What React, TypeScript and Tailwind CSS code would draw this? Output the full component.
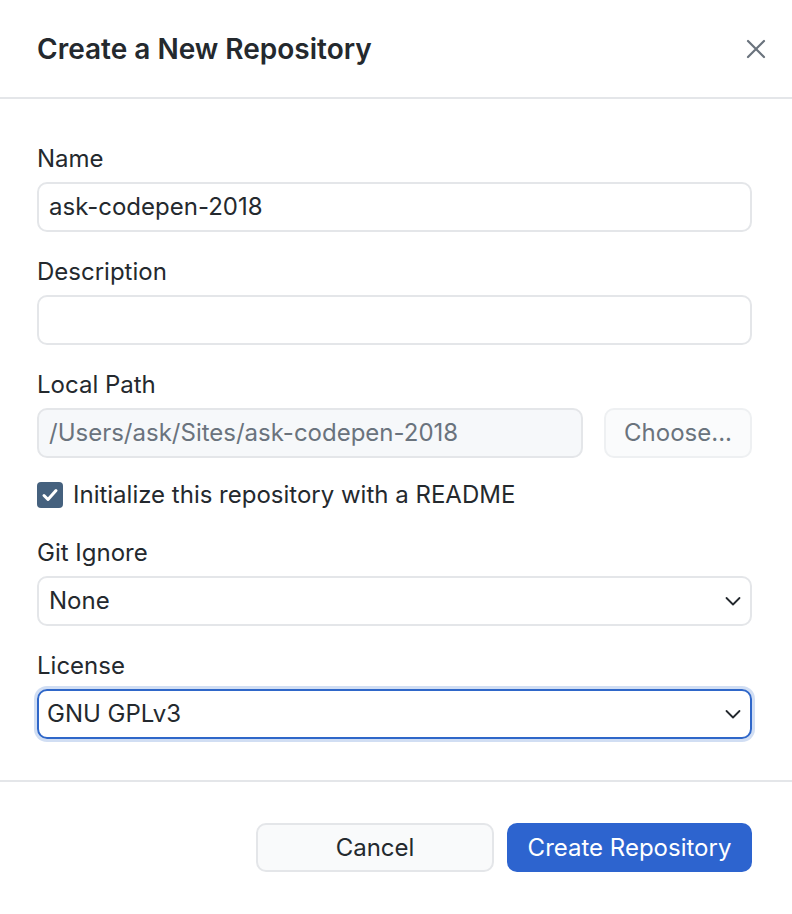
import React from "react";

function Chevron() {
  return (
    <svg width="18" height="18" viewBox="0 0 18 18" fill="none" className="shrink-0">
      <path d="M2.5 6l6.5 6.5L15.5 6" stroke="#24292e" strokeWidth="1.8" strokeLinecap="round" strokeLinejoin="round" />
    </svg>
  );
}

export default function App() {
  const font = { fontFamily: "Inter, 'Liberation Sans', sans-serif" };
  return (
    <div className="w-[792px] h-[914px] bg-white text-[#24292e] flex flex-col overflow-hidden" style={font}>
      <div className="h-[99px] shrink-0 border-b-2 border-[#e4e6e9] flex items-center justify-between pl-[37px] pr-[25px]">
        <h1 className="text-[28px] font-semibold leading-[32px]">Create a New Repository</h1>
        <svg width="20" height="20" viewBox="0 0 20 20" className="mr-[1px]">
          <path d="M2 2L18 18M18 2L2 18" stroke="#6a737d" strokeWidth="2.2" strokeLinecap="round" />
        </svg>
      </div>

      <div className="flex-1 flex flex-col px-[37px] pt-[46px] pr-[40px]">
        <label className="text-[24px] leading-[28px]">Name</label>
        <div className="mt-[9px] h-[50px] rounded-[10px] border-2 border-[#e4e6e9] flex items-center px-[10px] text-[24px]">
          ask-codepen-2018
        </div>

        <label className="mt-[26px] text-[24px] leading-[28px]">Description</label>
        <div className="mt-[9px] h-[50px] rounded-[10px] border-2 border-[#e4e6e9]" />

        <label className="mt-[26px] text-[24px] leading-[28px]">Local Path</label>
        <div className="mt-[9px] flex gap-[21px]">
          <div className="flex-1 h-[50px] rounded-[10px] border-2 border-[#e4e6e9] bg-[#f6f8fa] flex items-center px-[10px] text-[24px] text-[#6a737d]">
            /Users/ask/Sites/ask-codepen-2018
          </div>
          <div className="w-[148px] h-[50px] rounded-[10px] border-2 border-[#eef0f2] bg-[#fafbfc] flex items-center justify-center text-[24px] text-[#6a737d]">
            Choose...
          </div>
        </div>

        <div className="mt-[24px] flex items-center gap-[10px] h-[26px]">
          <div className="w-[26px] h-[26px] rounded-[4px] bg-[#45617e] flex items-center justify-center">
            <svg width="20" height="20" viewBox="0 0 20 20">
              <path d="M4 10.5l4 4L16 5.5" stroke="white" strokeWidth="3" fill="none" strokeLinecap="round" strokeLinejoin="round" />
            </svg>
          </div>
          <span className="text-[24px] leading-[28px]">Initialize this repository with a README</span>
        </div>

        <label className="mt-[31px] text-[24px] leading-[28px]">Git Ignore</label>
        <div className="mt-[9px] h-[50px] rounded-[10px] border-2 border-[#e4e6e9] flex items-center justify-between pl-[10px] pr-[8px] text-[24px]">
          <span>None</span>
          <Chevron />
        </div>

        <label className="mt-[26px] text-[24px] leading-[28px]">License</label>
        <div className="mt-[9px] h-[50px] rounded-[10px] border-2 border-[#2f67c9] shadow-[0_0_0_3px_rgba(47,103,201,0.22)] flex items-center justify-between pl-[8px] pr-[8px] text-[24px]">
          <span>GNU GPLv3</span>
          <Chevron />
        </div>
      </div>

      <div className="h-[134px] shrink-0 border-t-2 border-[#e4e6e9] flex items-start justify-end gap-[13px] pt-[41px] pr-[40px]">
        <button className="w-[238px] h-[49px] rounded-[10px] border-2 border-[#e4e6e9] bg-[#f9fafb] text-[24px] text-[#24292e]">
          Cancel
        </button>
        <button className="w-[245px] h-[49px] rounded-[10px] bg-[#2d64cf] text-[24px] text-white">
          Create Repository
        </button>
      </div>
    </div>
  );
}
